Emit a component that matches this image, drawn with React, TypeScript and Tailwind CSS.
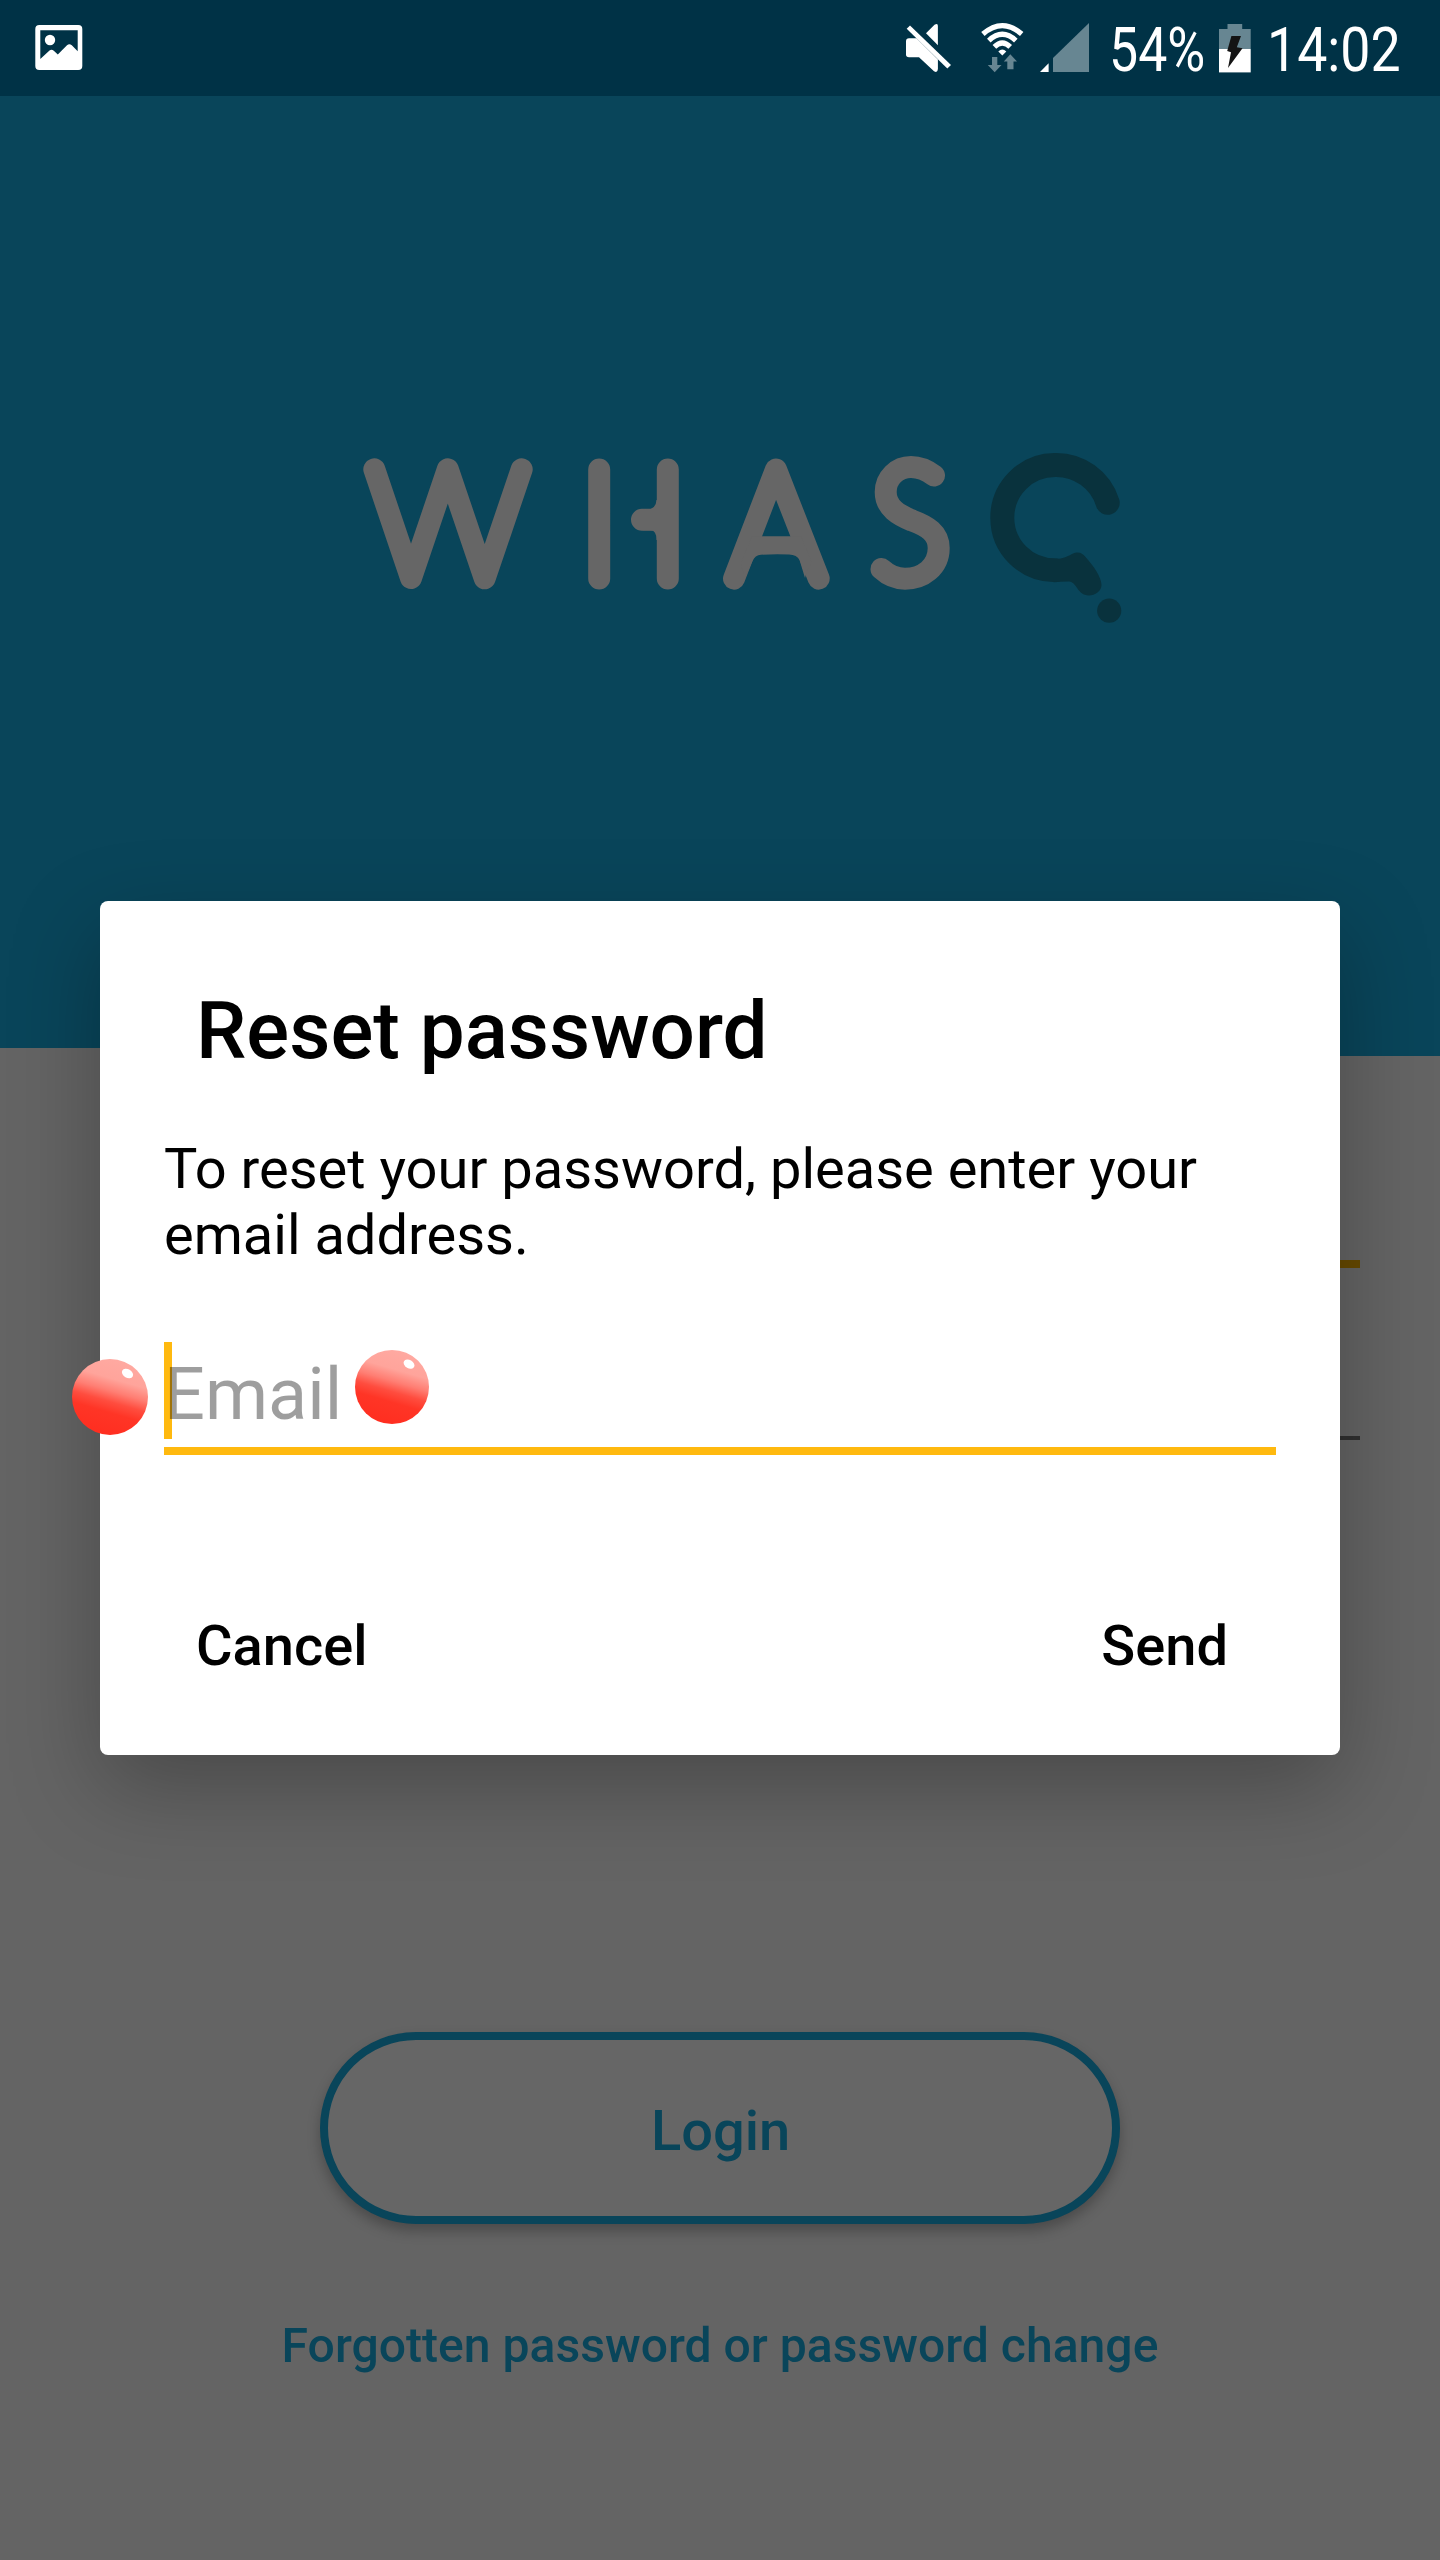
import React from "react";

function StatusBar() {
  return (
    <div className="flex h-24 shrink-0 items-center bg-[#003246] pl-[34px] text-white">
      <svg width="50" height="96" viewBox="34 0 50 96" className="block">
        <path
          fill="#fff"
          fillRule="evenodd"
          d="M39.3 25h39a4 4 0 0 1 4 4v37a4 4 0 0 1-4 4h-39a4 4 0 0 1-4-4V29a4 4 0 0 1 4-4ZM40.3 30.3V59L49.5 50.5Q51.7 49 53.8 50.8L57.8 54.5L67 45.3Q69.3 43.3 71.8 45.3L77.7 51.2V30.3Z"
        />
        <circle cx="50" cy="40" r="5.2" fill="#fff" />
      </svg>
      <svg width="191" height="96" viewBox="900 0 191 96" className="ml-[816px] block shrink-0">
        <g fill="#fff">
          <path d="M910 25.5L951 65L947.3 68.6L906.7 28.8Z" />
          <path d="M926 33.3L934.5 24.8Q937.9 22.5 937.9 26V45.2Z" />
          <path d="M909 38.3H916.5L937.9 59.5V69Q937.5 73.5 934 71.2L919 57.3H909Q906 57.3 906 54.5V41.3Q906 38.3 909 38.3Z" />
        </g>
        <g fill="none" stroke="#fff" strokeWidth="5.2">
          <path d="M982.9 34Q1002.3 17.2 1021.7 34" />
          <path d="M988.8 40.6Q1002.3 28 1015.8 40.6" />
          <path d="M994.4 46.8Q1002.3 39 1010.2 46.8" />
        </g>
        <path fill="#fff" d="M998.3 51.4Q1002.3 47.4 1006.3 51.4L1002.3 55.5Z" />
        <g fill="#678692">
          <path d="M992 57H997.3V65H1001.5L994.7 72.3L987.8 65H992Z" />
          <path d="M1010.3 54.3L1017 61.5H1013.5V69.2H1007.3V61.5H1003.8Z" />
          <path d="M1053 72V58L1089 23V72Z" />
        </g>
        <path fill="#fff" d="M1040 72L1048.6 63.2V72Z" />
      </svg>
      <span className="ml-[18px] block w-[100px] origin-left scale-x-[0.85] whitespace-nowrap pt-[4px] text-[61px] leading-none">
        54%
      </span>
      <svg width="34" height="96" viewBox="1218 0 34 96" className="ml-[9px] block shrink-0">
        <path fill="#678692" d="M1219 29H1227.5V24H1242.2V29H1250.7V49H1219Z" />
        <path fill="#fff" d="M1219 49H1250.7V72.4H1219Z" />
        <path fill="#141414" d="M1231.4 36H1241L1236.8 47.3L1242.5 48.3L1228 68L1231 52.3L1227.2 51Z" />
      </svg>
      <span className="ml-[15px] block w-[140px] origin-left scale-x-[0.88] whitespace-nowrap pt-[4px] text-[61px] leading-none">
        14:02
      </span>
    </div>
  );
}

function Logo() {
  return (
    <svg width="780" height="190" viewBox="350 440 780 190" role="img" aria-label="WHASQ" className="block">
      <g fill="none" stroke="#666666" strokeWidth="22" strokeLinecap="round" strokeLinejoin="round">
        <path d="M374.3 469.3L411 578L447.8 469.3L484.7 578.3L521.7 469.3" />
        <path d="M599.2 469.5V578.5M667.8 469.5V578.5M642 519.8H667" />
        <path d="M734 578.6L776 469.5L818.7 578.6" />
        <path d="M934 475.5C926 469.5 919 467 911 467C897 467 885.7 478 885.7 492C885.7 508 899 515 912 520.5C927 526 938.7 533 938.7 548C938.7 567 923 578.7 905 578.7C896 578.7 888 575 881.5 569" />
      </g>
      <path fill="#666666" d="M752 536.3H801L812 563Q808 566 805 578L799.5 560Q797 554.8 789 554.5Q776 553.8 761 554.7Q755 555 752.5 561L745 578Q741 566 741 563Z" />
      <path fill="#666666" d="M643 509.3Q656 511 656.5 500L661 500V540H656.5Q656.5 530 650 530.3H643Z" />
      <path d="M1107.7 502.8A54 54 0 0 0 1055 465C1026 465 1002.3 488.5 1002.3 517.7C1002.3 547 1026 570.3 1055 570.3" fill="none" stroke="#09323d" strokeWidth="24" strokeLinecap="round" />
      <path fill="#09323d" d="M1052 559C1068 559.5 1071 552.5 1077.5 552.5C1081 552.5 1083 554 1085.5 557C1093 565 1101.5 577 1101.5 585C1101.5 591 1095 595.5 1089 595.5C1077 595.5 1077 582 1069 581.6L1052 582Z" />
      <circle cx="1109.2" cy="610.7" r="12.1" fill="#09323d" />
    </svg>
  );
}

function Ball({ size, id }: { size: number; id: string }) {
  return (
    <svg width={size} height={size} viewBox="0 0 76 76" className="block">
      <defs>
        <linearGradient id={id} x1="0.64" y1="0.02" x2="0.36" y2="0.98">
          <stop offset="0" stopColor="#ffa9a1" />
          <stop offset="0.26" stopColor="#ffa49b" />
          <stop offset="0.42" stopColor="#ff7e73" />
          <stop offset="0.56" stopColor="#ff4d3f" />
          <stop offset="0.7" stopColor="#ff3526" />
          <stop offset="1" stopColor="#ff2e20" />
        </linearGradient>
      </defs>
      <circle cx="38" cy="38" r="38" fill={`url(#${id})`} />
      <ellipse cx="55.5" cy="14.5" rx="6" ry="4.2" transform="rotate(30 55.5 14.5)" fill="#fff" />
    </svg>
  );
}

function ResetDialog() {
  return (
    <div className="absolute left-[100px] top-[901px] flex h-[854px] w-[1240px] flex-col rounded-lg bg-white px-16 text-black shadow-[0_32px_90px_rgba(0,0,0,0.27)]">
      <h1 className="pl-8 pt-[83px] text-[80px] font-medium leading-[94px]">Reset password</h1>
      <p className="mt-[58px] whitespace-nowrap text-[56px] leading-[66px]">
        To reset your password, please enter your
        <br />
        email address.
      </p>
      <div className="relative mt-[74px] h-[113px] border-b-8 border-[#ffb90f]">
        <div className="flex h-[97px] w-full items-center border-l-8 border-[#ffb90f]">
          <span className="-ml-2 pt-[9px] text-[72px] leading-[84px] text-black/38">Email</span>
        </div>
        <div className="absolute -left-[92px] top-[17px]">
          <Ball size={76} id="ball-left" />
        </div>
        <div className="absolute left-[191px] top-[8px]">
          <Ball size={74} id="ball-right" />
        </div>
      </div>
      <div className="mt-[158px] flex justify-between pl-8 pr-[48px] text-[56px] font-medium leading-[66px]">
        <button>Cancel</button>
        <button>Send</button>
      </div>
    </div>
  );
}

export default function App() {
  return (
    <div className="relative flex h-[2560px] w-[1440px] flex-col overflow-hidden bg-[#646464] font-['Roboto',sans-serif]">
      <StatusBar />
      <header className="flex h-[952px] shrink-0 justify-center bg-[#09455a] pl-[40px] pt-[344px]">
        <Logo />
      </header>
      <div className="ml-auto h-2 w-[720px] shrink-0 bg-[#09455a]" />
      <div className="mx-[80px] flex flex-col pl-6">
        <div className="mt-[204px] h-2 bg-[#664900]" />
        <div className="mt-[168px] h-1 bg-[#303030]" />
      </div>
      <div className="mt-[592px] flex flex-col items-center text-[#09455a]">
        <button className="h-48 w-[800px] rounded-full border-8 border-[#09455a] bg-[#666666] pl-px pt-[5px] text-[56px] font-medium shadow-[0_7px_13px_rgba(0,0,0,0.26)]">
          Login
        </button>
        <a className="mt-[94px] text-[48.1px] font-medium leading-[56px]">Forgotten password or password change</a>
      </div>
      <ResetDialog />
    </div>
  );
}
